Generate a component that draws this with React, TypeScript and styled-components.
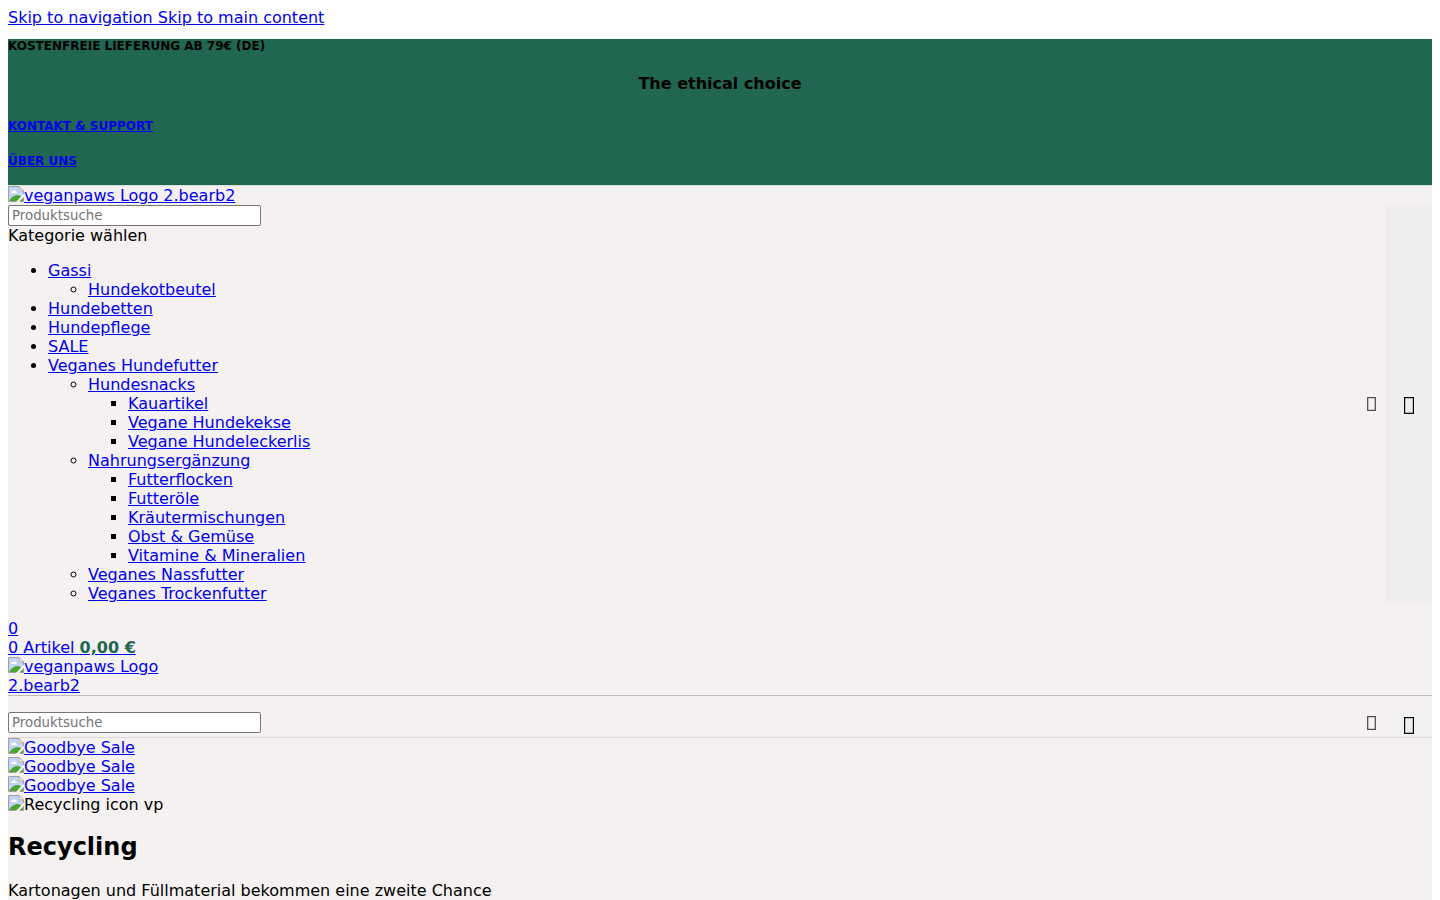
import React from "react";
import styled, { createGlobalStyle } from "styled-components";

const GlobalStyle = createGlobalStyle`
  html { background: #fff; }
  body {
    margin: 8px;
    font-family: "DejaVu Sans", sans-serif;
    font-size: 16px;
    line-height: 19px;
    color: #000;
  }
  a { color: #0000ee; text-decoration: underline; }
`;

const SkipLinks = styled.nav`
  padding-bottom: 12px;
`;

const TopBar = styled.div`
  display: flow-root;
  background: #216650;
  border-bottom: 1px solid #d3e0dc;
`;

const TopLabel = styled.h5<{ $last?: boolean }>`
  margin: 0 0 ${(p) => (p.$last ? "17px" : "21px")};
  font-size: 12px;
  line-height: 14px;
`;

const TopTitle = styled.h4`
  margin: 0 0 26px;
  text-align: center;
`;

const PageBody = styled.div`
  padding-bottom: 20px;
  background: #f4f1f0;
`;

const HeaderSection = styled.header`
  border-bottom: 1px solid #bfbdbc;
`;

const LogoBox = styled.div<{ $narrow?: boolean }>`
  max-width: ${(p) => (p.$narrow ? "160px" : "250px")};
`;

const CartCount = styled.div`
  margin-top: 16px;
`;

const StickySearch = styled.div`
  padding: 16px 0 3px;
  border-bottom: 1px solid #dbd8d7;
`;

const Form = styled.form`
  display: flex;
  align-items: stretch;
`;

const FormMain = styled.div`
  flex: 1;
`;

const SearchInput = styled.input`
  display: block;
  box-sizing: border-box;
  width: 253px;
  height: 21px;
  margin: 0;
  padding: 1px 3px;
  border: 1px solid #767676;
  border-radius: 2px;
  background: #fff;
  font-family: "DejaVu Sans", sans-serif;
  &::placeholder { color: #757575; }
`;

const ClearMark = styled.span`
  display: flex;
  align-items: center;
  margin-right: 9px;
`;

const SubmitButton = styled.button<{ $plain?: boolean }>`
  display: flex;
  align-items: center;
  justify-content: center;
  width: 47px;
  padding: ${(p) => (p.$plain ? "5px 0 0" : "2px 0 0")};
  border: 0;
  background: ${(p) => (p.$plain ? "#f2f1f1" : "#eeeeee")};
`;

const CategoryList = styled.ul`
  margin: 16px 0 0;
  padding-left: 40px;
  ul { margin: 0; }
`;

const Amount = styled.bdi`
  font-weight: bold;
  color: #216650;
`;

const Picture = styled.svg`
  width: 16px;
  height: 16px;
  vertical-align: -1px;
`;

const Heading = styled.h2`
  margin: 19px 0 20px;
  font-size: 24px;
  line-height: 28px;
`;

const Text = styled.p`
  margin: 0;
`;

function ImageIcon() {
  return (
    <Picture viewBox="0 0 16 16" aria-hidden="true">
      <path d="M.5 15.500V.5H11L15.500 5V15.500Z" fill="#fff" />
      <path d="M1 1H10.500V5.500H15V15H1Z" fill="#c1d6f6" />
      <path d="M3 6.500c0-1 1-1.500 1.800-1.200C5.200 4 7.500 4 7.800 5.500c1 0 1.200 1 .7 1.500H3.300Z" fill="#fff" />
      <path d="M1 15C3 11.500 6 9 9 9S14 11 15 13V15Z" fill="#4ea432" />
      <path d="M.5 15.500V.5H11L15.500 5V15.500ZM11 .5V5H15.500" fill="none" stroke="#a0a0a0" />
      <path d="M16 7.500 8 16H11L16 10.500Z" fill="#fbfafa" />
    </Picture>
  );
}

function ClearIcon() {
  return (
    <svg width="9" height="14" viewBox="0 0 9 14" aria-hidden="true">
      <rect x=".7" y=".6" width="7.600" height="12.800" fill="none" stroke="#4a4546" strokeWidth="1.200" />
    </svg>
  );
}

function SearchIcon() {
  return (
    <svg width="10" height="17" viewBox="0 0 10 17" aria-hidden="true">
      <rect x=".6" y=".6" width="8.800" height="15.700" fill="none" stroke="#000" strokeWidth="1.200" />
    </svg>
  );
}

type Category = { name: string; children?: Category[] };

const categories: Category[] = [
  { name: "Gassi", children: [{ name: "Hundekotbeutel" }] },
  { name: "Hundebetten" },
  { name: "Hundepflege" },
  { name: "SALE" },
  {
    name: "Veganes Hundefutter",
    children: [
      {
        name: "Hundesnacks",
        children: [
          { name: "Kauartikel" },
          { name: "Vegane Hundekekse" },
          { name: "Vegane Hundeleckerlis" },
        ],
      },
      {
        name: "Nahrungsergänzung",
        children: [
          { name: "Futterflocken" },
          { name: "Futteröle" },
          { name: "Kräutermischungen" },
          { name: "Obst & Gemüse" },
          { name: "Vitamine & Mineralien" },
        ],
      },
      { name: "Veganes Nassfutter" },
      { name: "Veganes Trockenfutter" },
    ],
  },
];

function Items({ items }: { items: Category[] }) {
  return (
    <>
      {items.map((c) => (
        <li key={c.name}>
          <a href="#">{c.name}</a>
          {c.children && (
            <ul>
              <Items items={c.children} />
            </ul>
          )}
        </li>
      ))}
    </>
  );
}

function SearchForm({ plain, children }: { plain?: boolean; children?: React.ReactNode }) {
  return (
    <Form role="search">
      <FormMain>
        <SearchInput type="text" placeholder="Produktsuche" aria-label="Produktsuche" />
        {children}
      </FormMain>
      <ClearMark><ClearIcon /></ClearMark>
      <SubmitButton type="submit" $plain={plain} aria-label="Suche"><SearchIcon /></SubmitButton>
    </Form>
  );
}

export default function App() {
  return (
    <>
      <GlobalStyle />
      <SkipLinks>
        <a href="#nav">Skip to navigation </a>
        <a href="#main">Skip to main content</a>
      </SkipLinks>
      <PageBody>
        <TopBar>
          <TopLabel>KOSTENFREIE LIEFERUNG AB 79€ (DE)</TopLabel>
          <TopTitle>The ethical choice</TopTitle>
          <TopLabel><a href="#kontakt">KONTAKT &amp; SUPPORT</a></TopLabel>
          <TopLabel $last><a href="#uns">ÜBER UNS</a></TopLabel>
        </TopBar>
        <HeaderSection id="nav">
          <LogoBox><a href="#home"><ImageIcon />veganpaws Logo 2.bearb2</a></LogoBox>
          <SearchForm>
            <div>Kategorie wählen</div>
            <CategoryList><Items items={categories} /></CategoryList>
          </SearchForm>
          <CartCount><a href="#cart">0</a></CartCount>
          <div><a href="#cart">0 Artikel <Amount>0,00 €</Amount></a></div>
          <LogoBox $narrow><a href="#home"><ImageIcon />veganpaws Logo 2.bearb2</a></LogoBox>
        </HeaderSection>
        <StickySearch><SearchForm plain /></StickySearch>
        <main id="main">
          <div><a href="#sale"><ImageIcon />Goodbye Sale</a></div>
          <div><a href="#sale"><ImageIcon />Goodbye Sale</a></div>
          <div><a href="#sale"><ImageIcon />Goodbye Sale</a></div>
          <div><ImageIcon />Recycling icon vp</div>
          <Heading>Recycling</Heading>
          <Text>Kartonagen und Füllmaterial bekommen eine zweite Chance</Text>
        </main>
      </PageBody>
    </>
  );
}
